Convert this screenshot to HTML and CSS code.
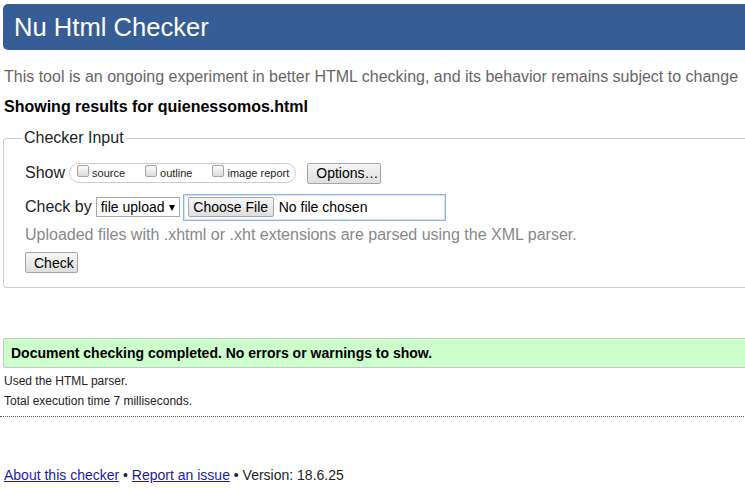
FILE: index.html
```html
<!DOCTYPE html>
<html lang="en">
<head>
<meta charset="utf-8">
<title>Nu Html Checker</title>
<link rel="stylesheet" href="styles.css">
</head>
<body>
<div class="page">
  <h1 class="masthead">Nu Html Checker</h1>
  <p class="intro">This tool is an ongoing experiment in better HTML checking, and its behavior remains subject to change</p>
  <p class="results-for">Showing results for quienessomos.html</p>
  <form class="checker-form">
    <fieldset class="checker-input">
      <legend class="checker-legend">Checker Input</legend>
      <div class="row row-show">
        <span class="row-label">Show</span>
        <span class="pill">
          <label class="opt"><input type="checkbox" class="cb"><span>source</span></label>
          <label class="opt"><input type="checkbox" class="cb"><span>outline</span></label>
          <label class="opt"><input type="checkbox" class="cb"><span>image report</span></label>
        </span>
        <button type="button" class="btn btn-options">Options…</button>
      </div>
      <div class="row row-checkby">
        <span class="row-label">Check by</span>
        <span class="select-wrap">
          <select class="select"><option>file upload</option></select>
        </span>
        <span class="file-box"><input type="file" class="file"></span>
      </div>
      <p class="note">Uploaded files with .xhtml or .xht extensions are parsed using the XML parser.</p>
      <div class="row row-submit">
        <button type="button" class="btn btn-check">Check</button>
      </div>
    </fieldset>
  </form>
  <div class="success">Document checking completed. No errors or warnings to show.</div>
  <p class="meta meta-first">Used the HTML parser.</p>
  <p class="meta">Total execution time 7 milliseconds.</p>
  <hr class="dots">
  <p class="footer"><a href="#">About this checker</a> • <a href="#">Report an issue</a> • Version: 18.6.25</p>
</div>
</body>
</html>
```
FILE: styles.css
```css
html, body {
  margin: 0;
  padding: 0;
  overflow: hidden;
  background: #fff;
}
body {
  font-family: "Liberation Sans", Arial, sans-serif;
  color: #000;
}
.page {
  width: 800px;
  padding-top: 4px;
}
.masthead {
  margin: 0 0 0 3px;
  height: 46px;
  line-height: 46px;
  padding-left: 11px;
  background: #365d95;
  color: #fff;
  font-size: 25.6px;
  font-weight: normal;
  border-radius: 5px 0 0 5px;
}
.intro {
  margin: 17px 0 0 0;
  padding-left: 4px;
  font-size: 16px;
  line-height: 20px;
  color: #666;
  white-space: nowrap;
}
.results-for {
  margin: 10px 0 0 0;
  padding-left: 4px;
  font-size: 16px;
  line-height: 20px;
  font-weight: bold;
}
.checker-form {
  margin: 11px 0 0 3px;
}
.checker-input {
  margin: 0;
  padding: 13px 0 14px 21px;
  border: 1px solid #ccc;
  border-right: none;
  border-radius: 4px 0 0 4px;
  min-width: 0;
}
.checker-legend {
  margin-left: -3px;
  padding: 0 2px;
  font-size: 16px;
  line-height: 20px;
  color: #222;
}
.row {
  display: flex;
  align-items: center;
}
.row-show {
  height: 24px;
}
.row-checkby {
  height: 28px;
  margin-top: 8px;
}
.row-submit {
  margin-top: 7px;
}
.row-label {
  font-size: 16px;
  color: #222;
  margin-right: 4px;
}
.pill {
  display: inline-flex;
  align-items: center;
  height: 18px;
  padding: 0 6px 0 7px;
  border: 1px solid #ccc;
  border-radius: 10px;
  margin-top: -1px;
}
.opt {
  display: inline-flex;
  align-items: center;
  font-size: 11px;
  color: #222;
  margin-right: 20px;
}
.opt:last-child {
  margin-right: 0;
}
.cb {
  appearance: none;
  -webkit-appearance: none;
  width: 12px;
  height: 12px;
  margin: -3px 3px 0 0;
  border: 1px solid #a4a4a4;
  border-radius: 2px;
  background: linear-gradient(#fcfcfc, #dcdcdc);
  box-sizing: border-box;
}
.btn {
  font-family: "Liberation Sans", Arial, sans-serif;
  font-size: 14px;
  color: #000;
  height: 21px;
  padding: 0 8px;
  border: 1px solid #a6a6a6;
  border-radius: 2px;
  background: linear-gradient(#f6f6f6, #dedede);
  box-sizing: border-box;
}
.btn-options {
  margin-left: 11px;
  width: 74px;
}
.btn-check {
  width: 53px;
  height: 21px;
}
.select-wrap {
  position: relative;
  display: inline-block;
  margin-left: 0;
}
.select-wrap::after {
  content: "";
  position: absolute;
  right: 5px;
  top: 8px;
  border-left: 3.5px solid transparent;
  border-right: 3.5px solid transparent;
  border-top: 6px solid #000;
  pointer-events: none;
}
.select {
  appearance: none;
  -webkit-appearance: none;
  width: 84px;
  height: 20px;
  padding: 0 0 0 4px;
  border: 1px solid #a9a9a9;
  border-radius: 0;
  background: #fff;
  font-family: "Liberation Sans", Arial, sans-serif;
  font-size: 14px;
  color: #000;
  box-sizing: border-box;
}
.file-box {
  display: inline-flex;
  align-items: center;
  margin-left: 3px;
  width: 263px;
  height: 27px;
  padding-left: 4px;
  border: 1px solid #8db4e6;
  box-shadow: inset 0 0 0 1px #d2e3f7;
  box-sizing: border-box;
}
.file {
  font-family: "Liberation Sans", Arial, sans-serif;
  font-size: 14px;
  color: #000;
  width: 250px;
}
.file::file-selector-button {
  font-family: "Liberation Sans", Arial, sans-serif;
  font-size: 14px;
  color: #000;
  width: 86px;
  height: 20px;
  margin-right: 5px;
  padding: 0;
  border: 1px solid #a6a6a6;
  border-radius: 2px;
  background: linear-gradient(#f6f6f6, #dedede);
}
.note {
  margin: 4px 0 0 0;
  font-size: 16px;
  line-height: 20px;
  color: #888;
}
.success {
  margin: 50px 0 0 3px;
  height: 28px;
  line-height: 28px;
  padding-left: 7px;
  background: #ccffcc;
  border: 1px solid #c2cbc2;
  border-right: none;
  border-radius: 3px 0 0 3px;
  font-size: 14px;
  font-weight: bold;
}
.meta {
  margin: 0;
  padding-left: 4px;
  font-size: 12px;
  line-height: 20px;
  color: #222;
}
.meta-first {
  margin-top: 3px;
}
.dots {
  margin: 5px 0 0 0;
  height: 0;
  border: none;
  border-top: 1px dotted #555;
}
.footer {
  margin: 49px 0 0 0;
  padding-left: 4px;
  font-size: 14px;
  line-height: 18px;
  color: #222;
}
.footer a {
  color: #1a1aa6;
}
```
